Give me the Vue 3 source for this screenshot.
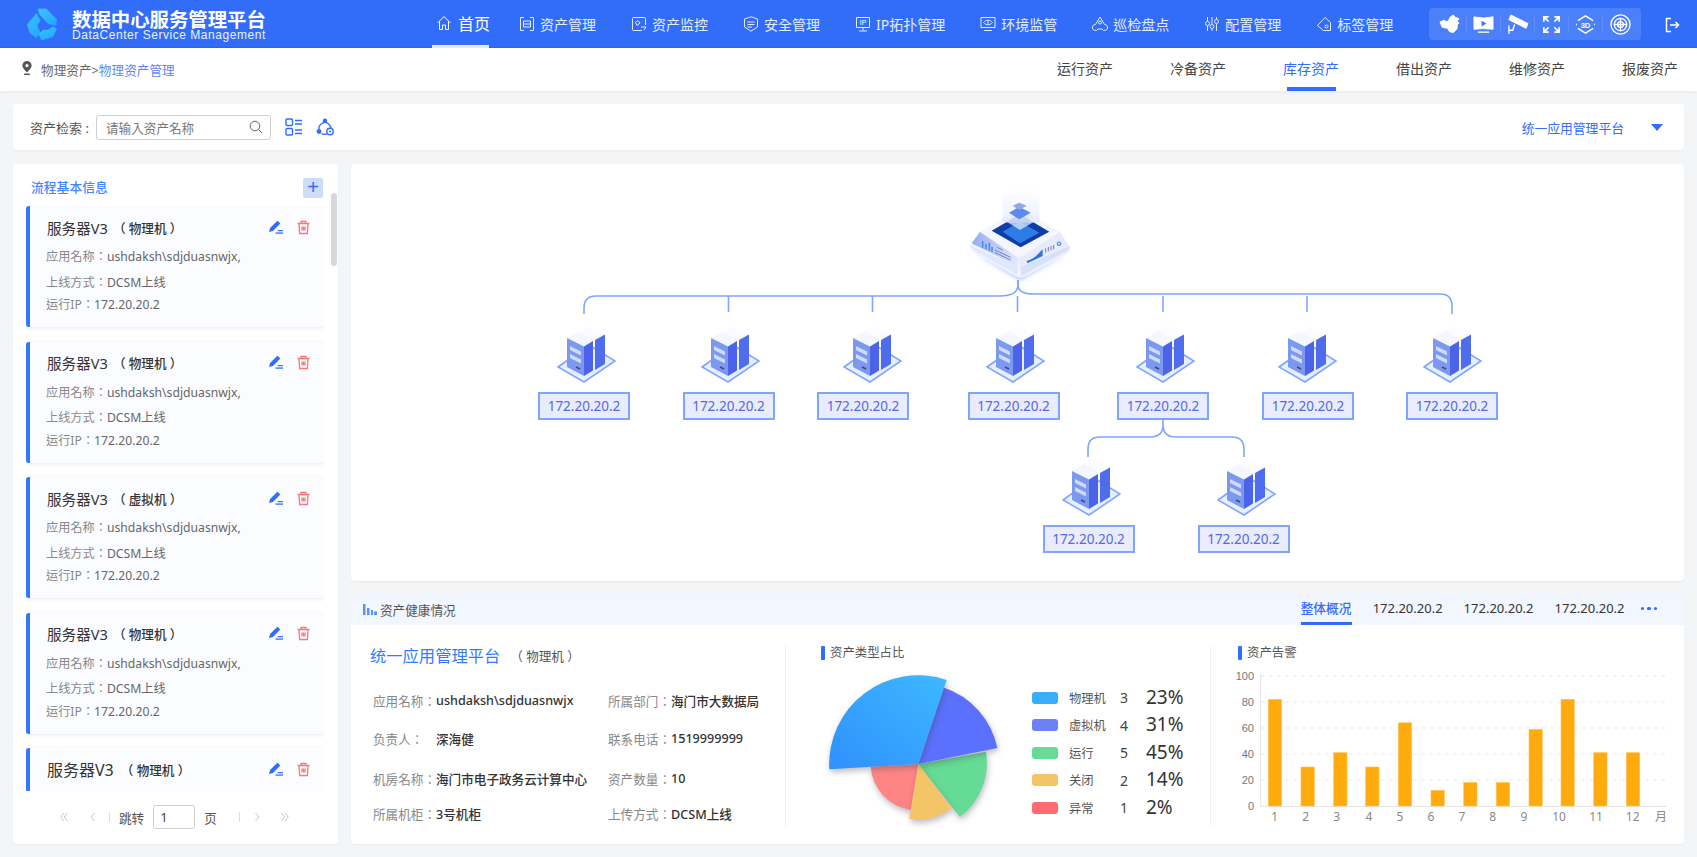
<script setup>
const navItems = [
  { t: '资产管理', i: 'asset' }, { t: '资产监控', i: 'monitor' }, { t: '安全管理', i: 'shield' },
  { t: 'IP拓扑管理', i: 'ip' }, { t: '环境监管', i: 'eye' }, { t: '巡检盘点', i: 'patrol' },
  { t: '配置管理', i: 'config' }, { t: '标签管理', i: 'tag' }
]
const subTabs = ['运行资产', '冷备资产', '库存资产', '借出资产', '维修资产', '报废资产']
const cards = [
  { kind: '物理机' }, { kind: '物理机' }, { kind: '虚拟机' }, { kind: '物理机' }
]
const rootLines = [728.5, 872.5, 1017.5, 1163, 1307]
const topNodes = [
  { x: 584, ix: 586 }, { x: 728.5, ix: 730 }, { x: 863, ix: 872.5 }, { x: 1013.5, ix: 1015 },
  { x: 1163, ix: 1165 }, { x: 1308, ix: 1307 }, { x: 1452, ix: 1452 }
]
const childNodes = [{ x: 1088.5, ix: 1091 }, { x: 1243.5, ix: 1246 }]
const nodePos = (n, top) => ({ left: `${n.x - 351 - 46}px`, top: `${top - 164}px` })
const iconPos = (n, top) => ({ left: `${n.ix - 351 - 29.5}px`, top: `${top - 164}px` })
const legend = [
  { n: '物理机', c: '#36adff', v: 3, p: '23%' }, { n: '虚拟机', c: '#6e80f6', v: 4, p: '31%' },
  { n: '运行', c: '#65db95', v: 5, p: '45%' }, { n: '关闭', c: '#f4c567', v: 2, p: '14%' },
  { n: '异常', c: '#ff6b72', v: 1, p: '2%' }
]
const slices = [
  { d: 'M918.3 764L910.7 810A47 47 0 0 1 870.7 766.7Z', f: '#ff8585' },
  { d: 'M918.3 764L986 751.7A68.8 68.8 0 0 1 960 817Z', f: '#65db95' },
  { d: 'M918.3 764L951.7 808A55.5 55.5 0 0 1 909.3 819Z', f: '#f4c567' },
  { d: 'M918.3 764L943.5 687.5A80.6 80.6 0 0 1 997.3 748Z', f: '#5b70fd' },
  { d: 'M918.3 764L829.3 769.3A89 89 0 0 1 946.7 680Z', f: 'url(#pieBlue)' }
]
const barX = [1268.3, 1301, 1333.7, 1365.7, 1398.3, 1431, 1463.7, 1496.3, 1529, 1561, 1593.7, 1626.3]
const barV = [82, 30, 41, 30, 64, 12, 18, 18, 59, 82, 41, 41]
const bars = barX.map((x, i) => ({ x, y: 806 - barV[i] * 1.3, h: barV[i] * 1.3 }))
const yTicks = [0, 20, 40, 60, 80, 100].map((v) => ({ v, y: 806 - v * 1.3 }))
const xLabels = [
  ['1', 1274.7], ['2', 1305.7], ['3', 1336.7], ['4', 1369], ['5', 1400], ['6', 1431], ['7', 1462],
  ['8', 1492.7], ['9', 1524], ['10', 1559], ['11', 1596], ['12', 1632.7], ['月', 1661]
]
</script>

<template>
  <div class="page">
    <header class="topbar">
      <div class="brand">
        <svg class="logo" viewBox="0 0 90 97">
          <defs>
            <linearGradient id="logoG" x1="0" y1="0" x2="1" y2="1">
              <stop offset="0" stop-color="#3fc4ff" />
              <stop offset="1" stop-color="#1fa3ff" />
            </linearGradient>
          </defs>
          <g fill="url(#logoG)" stroke="url(#logoG)" stroke-width="2" stroke-linejoin="round">
            <path d="M33 3L58 3L90 35L86 53L63 47L48 30L38 20Z" />
            <path d="M1 50L28 17L40 37L30 53L40 75L28 90L8 75Z" />
            <path d="M43 96L36 80L48 67L63 67L78 57L89 63L78 87L48 96Z" />
          </g>
        </svg>
        <div class="brand-text">
          <div class="brand-cn">数据中心服务管理平台</div>
          <div class="brand-en">DataCenter Service Management</div>
        </div>
      </div>
      <nav class="nav">
        <a class="nav-home">
          <svg class="nav-ic" viewBox="0 0 16 16"><path d="M1.5 8L8 1.5L14.5 8M3.5 6.5V14.5H6.5V10H9.5V14.5H12.5V6.5" /></svg>
          <span>首页</span>
        </a>
        <a v-for="n in navItems" :key="n.t" class="nav-item">
          <svg class="nav-ic" viewBox="0 0 16 16">
            <template v-if="n.i === 'asset'">
              <path d="M5 1.5H1.5V14.5H5M11 1.5H14.5V14.5H11M4.5 5H11.5V8H4.5ZM4.5 8V11H11.5V8" />
            </template>
            <template v-else-if="n.i === 'monitor'">
              <path d="M11 14.5H2.5A1 1 0 0 1 1.5 13.5V2.5A1 1 0 0 1 2.5 1.5H13.5A1 1 0 0 1 14.5 2.5V9M4.5 6.5L7 4.5L9 7L6 9.5ZM10 11H15L13 14" />
            </template>
            <template v-else-if="n.i === 'shield'">
              <path d="M8 .8L14.5 3V11L8 15.2L1.5 11V3ZM4.5 6H11.5M4.5 8.5H11.5M4.5 11H9" />
            </template>
            <template v-else-if="n.i === 'ip'">
              <path d="M1.5 1.5H14.5V11.5H1.5ZM8 11.5V14.5M4 15H12" />
              <text x="8" y="9" class="ic-text">IP</text>
            </template>
            <template v-else-if="n.i === 'eye'">
              <path d="M1 1.5H15V11.5H1ZM4 14.5H12" />
              <path d="M3.5 6.5C6 3.5 10 3.5 12.5 6.5C10 9.5 6 9.5 3.5 6.5ZM8 5.2V7.8" />
            </template>
            <template v-else-if="n.i === 'patrol'">
              <path d="M8 1L12.5 8.5A3 3 0 1 1 10 13H6A3 3 0 1 1 3.5 8.5Z" />
              <circle cx="8" cy="6.5" r="1.5" />
            </template>
            <template v-else-if="n.i === 'config'">
              <path d="M3.5 1V5M3.5 10V15M8 1V8M8 13V15M12.5 1V3M12.5 8V15" />
              <circle cx="3.5" cy="7.5" r="2" /><circle cx="8" cy="10.5" r="2" /><circle cx="12.5" cy="5.5" r="2" />
            </template>
            <template v-else>
              <path d="M9 1.5L14.5 6.5V14.5H7.5L1.5 9.5Z" />
              <circle cx="10.5" cy="10.5" r="1.5" />
            </template>
          </svg>
          <span>{{ n.t }}</span>
        </a>
      </nav>
      <div class="tools">
        <div class="tool">
          <svg viewBox="0 0 22 22"><path class="solid" d="M1 8.5L5 6.5L8 8L10 7L11.5 3.5L15 1L17 3.5L21 5L19 7.5L21 9.5L19 11.5L19 15.5L15 19.5L11 18.5L9 15L3.5 14Z" /></svg>
        </div>
        <div class="tool">
          <svg viewBox="0 0 22 22">
            <path class="solid" d="M1 3Q11 5.5 21 3V16Q11 14.5 1 16Z" />
            <path fill="#3e74f8" d="M9 7L14 10L9 13Z" />
            <path class="line" d="M5 19H17" />
          </svg>
        </div>
        <div class="tool">
          <svg viewBox="0 0 22 22">
            <path class="solid" d="M4 1L22 10L20 15L2 6Z" />
            <path class="line" d="M2 12V21M2 17H6L8 11" />
          </svg>
        </div>
        <div class="tool">
          <svg viewBox="0 0 22 22">
            <path class="line thick" d="M3 8V3H8M3 3L8 8M14 3H19V8M19 3L14 8M3 14V19H8M3 19L8 14M14 19H19V14M19 19L14 14" />
          </svg>
        </div>
        <div class="tool">
          <svg viewBox="0 0 22 22">
            <path class="line" d="M3 7L11 2L19 7M3 15L11 20L19 15M1 11H2M20 11H21" />
            <text x="11" y="14.5" class="ic-3d">3D</text>
          </svg>
        </div>
        <div class="tool last">
          <svg viewBox="0 0 22 22">
            <circle class="line" cx="11" cy="11" r="10" /><circle class="line" cx="11" cy="11" r="6.5" /><circle class="line" cx="11" cy="11" r="3" />
            <path class="line" d="M11 4V18M4 11H18" />
          </svg>
        </div>
      </div>
      <svg class="logout" viewBox="0 0 16 16"><path d="M7 1.5H2.5V14.5H7M6 8H14.5M11.5 5L14.5 8L11.5 11" /></svg>
    </header>

    <div class="subbar">
      <svg class="pin" viewBox="0 0 10 14"><path d="M5 0A4.6 4.6 0 0 0 .4 4.6C.4 7.5 5 11.5 5 11.5S9.6 7.5 9.6 4.6A4.6 4.6 0 0 0 5 0Z" /><circle cx="5" cy="4.6" r="1.6" fill="#fff" /><rect x="2" y="12.5" width="6" height="1.4" rx=".7" /></svg>
      <span class="crumb">物理资产&gt;</span><span class="crumb-active">物理资产管理</span>
      <div class="subtabs">
        <a v-for="s in subTabs" :key="s" class="subtab" :class="{ active: s === '库存资产' }">{{ s }}</a>
      </div>
    </div>

    <main class="content">
      <section class="search-panel">
        <span class="search-label">资产检索 :</span>
        <div class="search-box">
          <span>请输入资产名称</span>
          <svg viewBox="0 0 14 14"><circle cx="6" cy="6" r="4.8" /><path d="M9.5 9.5L13 13" /></svg>
        </div>
        <svg class="s-ic" viewBox="0 0 18 18"><rect x="1" y="1" width="6.5" height="6.5" rx="1" /><rect x="1" y="10.5" width="6.5" height="6.5" rx="1" /><path d="M10 2.5H17M10 6H17M10 12H17M10 15.5H17" /></svg>
        <svg class="s-ic" viewBox="0 0 18 18"><path d="M6 5.5Q9 3 12 5.5Q15 8 15 10M3 11Q2.5 7.5 6 5.5M5.5 15.5Q8 17 10.5 16" /><circle cx="9" cy="2.8" r="2.2" class="dot" /><circle cx="3" cy="13.5" r="2.4" class="dot" /><circle cx="14" cy="13.5" r="3.2" /><circle cx="14" cy="13.5" r="1.1" class="dot" /></svg>
        <span class="platform">统一应用管理平台</span>
        <span class="caret"></span>
      </section>

      <div class="columns">
        <aside class="left">
          <div class="left-head">
            <span class="left-title">流程基本信息</span>
            <span class="plus">+</span>
          </div>
          <div class="scroll-thumb"></div>
          <div class="card-list">
            <article v-for="(c, i) in cards" :key="i" class="card">
              <div class="card-title">
                <b>服务器V3</b><em>（ {{ c.kind }} ）</em>
                <svg class="ic-edit" viewBox="0 0 14 14"><path d="M8.8 .6L11.5 3.3L4.6 10.2L1 11.2L1.9 7.5Z" /><rect x="7" y="11.6" width="7" height="1.2" /><rect x="9" y="9.4" width="5" height="1.1" /></svg>
                <svg class="ic-del" viewBox="0 0 13 14"><path d="M.5 3H12.5M4 3V1H9V3M2 3L2.6 13H10.4L11 3M5 6V10M6.5 6V10M8 6V10" /></svg>
              </div>
              <p class="l1"><i>应用名称：</i>ushdaksh\sdjduasnwjx,</p>
              <p class="l2"><i>上线方式：</i>DCSM上线</p>
              <p class="l3"><i>运行IP：</i>172.20.20.2</p>
            </article>
            <article class="card card-cut">
              <div class="card-title big">
                <b>服务器V3</b><em>（ 物理机 ）</em>
                <svg class="ic-edit" viewBox="0 0 14 14"><path d="M8.8 .6L11.5 3.3L4.6 10.2L1 11.2L1.9 7.5Z" /><rect x="7" y="11.6" width="7" height="1.2" /><rect x="9" y="9.4" width="5" height="1.1" /></svg>
                <svg class="ic-del" viewBox="0 0 13 14"><path d="M.5 3H12.5M4 3V1H9V3M2 3L2.6 13H10.4L11 3M5 6V10M6.5 6V10M8 6V10" /></svg>
              </div>
            </article>
          </div>
          <div class="pager">
            <svg class="pg dbl" viewBox="0 0 8 10"><path d="M4 1L.8 5L4 9M7.5 1L4.3 5L7.5 9" /></svg>
            <svg class="pg sgl m22" viewBox="0 0 5 10"><path d="M4.5 1L1 5L4.5 9" /></svg>
            <span class="pg-sep m14"></span>
            <span class="pg-text m9">跳转</span>
            <input class="pg-input" value="1" readonly />
            <span class="pg-text m9">页</span>
            <span class="pg-sep m22"></span>
            <svg class="pg sgl m15" viewBox="0 0 5 10"><path d="M.5 1L4 5L.5 9" /></svg>
            <svg class="pg dbl m21" viewBox="0 0 8 10"><path d="M4 1L7.2 5L4 9M.5 1L3.7 5L.5 9" /></svg>
          </div>
        </aside>

        <div class="right">
          <section class="topo">
            <svg class="topo-lines" viewBox="351 164 1333 417">
              <g fill="none" stroke="#7ea6ff" stroke-width="1.6">
                <path d="M1018 280V285Q1018 296 1000 296H596Q584 296 584 308V314" />
                <path d="M1018 280V285Q1018 294 1034 294H1440Q1452 294 1452 306V314" />
                <path v-for="x in rootLines" :key="x" :d="`M${x} 296V312`" />
                <path d="M1163 419V425Q1163 437 1150 437H1100Q1088 437 1088 449V457M1163 425Q1163 437 1176 437H1232Q1244 437 1244 449V457" />
              </g>
            </svg>
            <svg class="root-ic" viewBox="0 0 360 330">
              <defs>
                <linearGradient id="glow" x1="0" y1="0" x2="0" y2="1"><stop offset="0" stop-color="#fff" /><stop offset="1" stop-color="#d5e2ff" /></linearGradient>
                <linearGradient id="panelL" x1="0" y1="0" x2="1" y2="0"><stop offset="0" stop-color="#94aaf3" /><stop offset="1" stop-color="#e6eafb" /></linearGradient>
                <filter id="rootGlow" x="-20%" y="-30%" width="140%" height="160%"><feGaussianBlur stdDeviation="7" /></filter>
              </defs>
              <path d="M35 215L180 300L325 220L180 285Z" fill="#9fc0ff" filter="url(#rootGlow)" />
              <path d="M30 195Q28 208 45 218L165 288Q180 298 198 288L318 222Q335 212 328 195L180 110Z" fill="#eef2fe" />
              <path d="M32 198L172 258V285L45 212Q30 204 32 198Z" fill="#e2e8fb" />
              <path d="M182 262L326 198Q332 208 316 216L184 288Z" fill="#d9e0fa" />
              <path d="M35 190L60 155L178 235L172 258Z" fill="url(#panelL)" />
              <path d="M178 235L300 155L325 195L180 262Z" fill="#e7eafb" />
              <path d="M60 155L180 85L300 155L178 235Z" fill="#f4f6fe" />
              <path d="M95 152L180 103L268 155L182 202Z" fill="#103ca8" />
              <path d="M128 155L180 125L238 158L180 190Z" fill="#2f7ce6" />
              <rect x="128" y="28" width="110" height="100" fill="url(#glow)" opacity=".55" />
              <path d="M140 125L180 104L222 125L180 150Z" fill="#dfe8fb" opacity=".75" />
              <path d="M147 98L178 80L212 98L178 118Z" fill="#5e8af0" />
              <path d="M158 77L178 68L200 77L178 90Z" fill="#8ea8e8" />
              <g stroke="#3f8cf0" stroke-width="4.5"><path d="M68 183V203M78 192V208M88 188V212M96 200V215" /></g>
              <g stroke="#7686c2" stroke-width="3"><path d="M105 210L152 232M105 218L152 240M112 202L128 210" /></g>
              <path d="M200 243Q222 235 232 224L248 208V228L202 250Z" fill="#2d76e0" />
              <g stroke="#6d7db8" stroke-width="3"><path d="M257 205V218M265 201V214M273 198V211M281 195V208" /></g>
              <circle cx="297" cy="191" r="5" fill="none" stroke="#3f8cf0" stroke-width="3.5" />
            </svg>
            <template v-for="n in topNodes" :key="n.x">
              <svg class="server" :style="iconPos(n, 325)" viewBox="0 0 59 58"><use href="#srv" /></svg>
              <div class="ip-node" :style="nodePos(n, 392)">172.20.20.2</div>
            </template>
            <template v-for="n in childNodes" :key="n.x">
              <svg class="server" :style="iconPos(n, 458)" viewBox="0 0 59 58"><use href="#srv" /></svg>
              <div class="ip-node" :style="nodePos(n, 525)">172.20.20.2</div>
            </template>
            <svg width="0" height="0" class="defs-only">
              <defs>
                <g id="srv">
                  <path d="M1 42L32 20L58 36L27 57Z" fill="#e6effe" stroke="#7ea6ff" stroke-width="1.6" />
                  <path d="M22 6L32 1L48 9.5L38 15Z" fill="#fbfcff" />
                  <path d="M38 15L48 9.5V39L38 45Z" fill="#4f6cec" />
                  <path d="M10 13L22 6L38 15L27 21Z" fill="#f4f7ff" />
                  <path d="M10 13L27 21.5V51L10 42Z" fill="#7c99f0" />
                  <path d="M27 21.5L36 16V45.5L27 51Z" fill="#4a63e8" />
                  <path d="M13 21L24 26.5V30.5L13 25ZM13 29L24 34.5V38.5L13 33Z" fill="#cfdafc" />
                  <path d="M19 42L23 44" stroke="#33479e" stroke-width="1.4" />
                </g>
              </defs>
            </svg>
          </section>

          <section class="health">
            <div class="health-head">
              <svg class="h-ic" viewBox="0 0 14 11"><path d="M0 0H2.5V11H0ZM4 4H6.5V11H4ZM8 6H10V11H8ZM11 7.5H14V11H11Z" /></svg>
              <span class="h-title">资产健康情况</span>
              <div class="h-tabs">
                <a class="h-tab active">整体概况</a>
                <a class="h-tab">172.20.20.2</a>
                <a class="h-tab">172.20.20.2</a>
                <a class="h-tab">172.20.20.2</a>
                <span class="dots"><i></i><i></i><i></i></span>
              </div>
            </div>
            <div class="health-body">
              <div class="col-info">
                <div class="info-title"><strong>统一应用管理平台</strong><span>（ 物理机 ）</span></div>
                <div class="info-grid">
                  <div><label>应用名称：</label><b>ushdaksh\sdjduasnwjx</b></div>
                  <div><label>所属部门：</label><b>海门市大数据局</b></div>
                  <div><label>负责人：</label><b>深海健</b></div>
                  <div><label>联系电话：</label><b>1519999999</b></div>
                  <div><label>机房名称：</label><b>海门市电子政务云计算中心</b></div>
                  <div><label>资产数量：</label><b>10</b></div>
                  <div><label>所属机柜：</label><b>3号机柜</b></div>
                  <div><label>上传方式：</label><b>DCSM上线</b></div>
                </div>
              </div>
              <div class="col-pie">
                <div class="sec-title">资产类型占比</div>
                <div class="pie-row">
                  <svg class="pie" viewBox="820 665 190 165">
                    <defs>
                      <linearGradient id="pieBlue" x1="0" y1="1" x2="1" y2="0"><stop offset="0" stop-color="#2f90fd" /><stop offset="1" stop-color="#3eb8ff" /></linearGradient>
                    </defs>
                    <path v-for="s in slices" :key="s.d" :d="s.d" :fill="s.f" class="slice" />
                  </svg>
                  <ul class="legend">
                    <li v-for="l in legend" :key="l.n">
                      <span class="swatch" :style="{ background: l.c }"></span>
                      <span class="lg-name">{{ l.n }}</span>
                      <span class="lg-val">{{ l.v }}</span>
                      <span class="lg-pct">{{ l.p }}</span>
                    </li>
                  </ul>
                </div>
              </div>
              <div class="col-bar">
                <div class="sec-title">资产告警</div>
                <svg class="bars" viewBox="1235 665 440 165">
                  <g v-for="t in yTicks" :key="t.v">
                    <line v-if="t.v" x1="1261" :y1="t.y" x2="1668" :y2="t.y" stroke="#e9e9e9" stroke-dasharray="4 4" />
                    <text x="1254" :y="t.y + 4" text-anchor="end" class="axis">{{ t.v }}</text>
                  </g>
                  <path d="M1260.7 674V806.5H1667" fill="none" stroke="#e4e4e8" />
                  <rect v-for="b in bars" :key="b.x" :x="b.x" :y="b.y" width="13.3" :height="b.h" fill="#ffaa0d" stroke="#ffc252" stroke-width=".6" />
                  <text v-for="l in xLabels" :key="l[0]" :x="l[1]" y="821" text-anchor="middle" class="axis x">{{ l[0] }}</text>
                </svg>
              </div>
            </div>
          </section>
        </div>
      </div>
    </main>
  </div>
</template>

<style>
html, body { margin: 0; background: #f4f5f7; }
</style>

<style scoped>
.page {
  width: 1697px; height: 857px; overflow: hidden; background: #f4f5f7;
  font-family: "Noto Sans", "Noto Sans CJK TC", sans-serif; color: #555; font-size: 12.6px;
}
p, ul { margin: 0; padding: 0; }
i, em { font-style: normal; }

/* top bar */
.topbar { height: 48px; background: #326dfa; display: flex; align-items: center; color: #fff; box-sizing: border-box; border-bottom: 1px solid #2f66ee; }
.brand { display: flex; align-items: center; margin-left: 27px; width: 405px; flex: none; }
.logo { width: 30px; height: 32px; flex: none; }
.brand-text { margin: 4px 0 0 15px; }
.brand-cn { font-size: 19.4px; font-weight: 700; line-height: 20px; height: 20px; white-space: nowrap; font-family: "Noto Sans CJK SC", sans-serif; }
.brand-en { font-family: "Liberation Sans", sans-serif; font-size: 12px; letter-spacing: .54px; line-height: 13px; white-space: nowrap; color: #eaf1ff; }
.nav { display: flex; align-items: stretch; height: 48px; }
.nav-home { width: 57px; box-sizing: border-box; padding-left: 4px; display: flex; align-items: center; gap: 6px; font-size: 16px; border-bottom: 3px solid #e4ebfb; margin-right: 30px; height: 48px; padding-top: 2px; white-space: nowrap; }
.nav-item { display: flex; align-items: center; gap: 5px; font-size: 14px; margin-right: 35px; color: #e3ecff; white-space: nowrap; }
.nav-ic { width: 16px; height: 16px; fill: none; stroke: currentColor; stroke-width: 1; flex: none; }
.ic-text { font: 7px "Liberation Sans", sans-serif; fill: #fff; stroke: none; text-anchor: middle; }
.tools { position: absolute; left: 1429px; top: 8px; width: 212px; height: 32px; box-sizing: border-box; padding-left: 4px; background: rgba(255,255,255,.13); border-radius: 4px; display: flex; align-items: center; }
.tool { width: 34px; height: 16px; display: flex; align-items: center; justify-content: center; border-right: 1px solid #5d8df8; box-sizing: border-box; }
.tool.last { border-right: 0; }
.tool svg { width: 21px; height: 21px; flex: none; overflow: visible; }
.solid { fill: #fff; stroke: #fff; stroke-linejoin: round; }
.line { fill: none; stroke: #fff; stroke-width: 1.4; }
.line.thick { stroke-width: 1.8; }
.ic-3d { font: 700 8px "Liberation Sans", sans-serif; fill: #fff; text-anchor: middle; }
.logout { position: absolute; left: 1664px; top: 17px; width: 16px; height: 16px; fill: none; stroke: #fff; stroke-width: 1.5; }

/* sub bar */
.subbar { height: 43px; background: #fff; display: flex; align-items: center; padding-left: 22px; box-shadow: 0 1px 3px rgba(60,80,120,.08); position: relative; }
.pin { width: 10px; height: 14px; fill: #555; margin-right: 9px; margin-top: -3px; }
.crumb { color: #666; letter-spacing: .05px; }
.crumb-active { color: #5f86f5; letter-spacing: .05px; }
.subtabs { margin-left: auto; margin-right: 19px; display: flex; align-items: stretch; height: 43px; gap: 57px; }
.subtab { font-size: 14px; line-height: 41px; width: 56px; text-align: center; color: #444; position: relative; white-space: nowrap; }
.subtab.active { color: #2f6dfa; }
.subtab.active::after { content: ""; position: absolute; left: 4px; right: 3px; bottom: 0; height: 4px; background: #2f6dfa; }

/* content */
.content { padding: 13px 13px 0; }
.search-panel { height: 46px; background: #fff; border-radius: 4px; display: flex; align-items: center; padding: 0 21px 0 17px; box-shadow: 0 1px 2px rgba(60,80,120,.06); }
.search-label { width: 66px; font-size: 13px; color: #555; white-space: nowrap; }
.search-box { width: 175px; height: 25px; box-sizing: border-box; border: 1px solid #cfcfcf; border-radius: 3px; display: flex; align-items: center; padding: 0 7px 0 9px; color: #777; font-size: 12.6px; }
.search-box svg { width: 14px; height: 14px; margin-left: auto; fill: none; stroke: #666; stroke-width: 1; }
.s-ic { width: 18px; height: 18px; fill: none; stroke: #2f6dfa; stroke-width: 1.4; margin-left: 14px; }
.s-ic + .s-ic { margin-left: 13px; }
.dot { fill: #2f6dfa; stroke: none; }
.platform { margin-left: auto; color: #2f6dfa; font-size: 12.8px; }
.caret { margin-left: 27px; width: 0; height: 0; border-left: 6.5px solid transparent; border-right: 6.5px solid transparent; border-top: 7px solid #2f6dfa; }

.columns { display: flex; gap: 13px; margin-top: 14px; height: 680px; }

/* left */
.left { width: 325px; flex: none; background: #fff; border-radius: 4px; box-sizing: border-box; padding: 10px 0 0 13px; position: relative; box-shadow: 0 1px 2px rgba(60,80,120,.06); }
.left-head { height: 28px; width: 297px; display: flex; align-items: center; justify-content: space-between; padding-left: 5px; box-sizing: border-box; }
.left-title { color: #3f87ff; font-size: 12.8px; font-weight: 500; margin-top: -3px; }
.plus { width: 20px; height: 20px; background: #ccdcfa; color: #2f6dfa; border-radius: 2px; text-align: center; font: 20px/19px "Liberation Sans", sans-serif; }
.scroll-thumb { position: absolute; left: 318px; top: 29px; width: 6px; height: 73px; background: #d8d8d8; border-radius: 3px; }
.card-list { margin-top: 4px; width: 298px; height: 585px; overflow: hidden; display: flex; flex-direction: column; gap: 14.5px; padding-bottom: 2px; box-sizing: border-box; }
.card { height: 121px; flex: none; box-sizing: border-box; background: #fbfcff; border-left: 4px solid #3377ff; border-radius: 3px; padding: 6px 14px 0 17px; box-shadow: 0 1px 4px rgba(70,90,140,.14); }
.card-cut { height: 44px; }
.card-title { height: 30px; margin-bottom: 2px; display: flex; align-items: center; }
.card-title b { font-size: 14.6px; font-weight: 400; color: #333; }
.card-title em { font-size: 12.6px; font-weight: 500; margin-left: 5px; color: #333; }
.card-title.big b { font-size: 16px; }
.card-title.big em { margin-left: 7px; }
.ic-edit { width: 15px; height: 15px; margin-left: auto; fill: #2f6dfa; }
.ic-del { width: 13px; height: 15px; margin-left: 14px; fill: none; stroke: #f87a7a; stroke-width: 1.3; }
.card p { color: #666; margin-left: -1px; white-space: nowrap; font-size: 12.2px; }
.card p i { color: #888; }
.l1, .l2 { height: 25.5px; line-height: 25.5px; }
.l3 { height: 20px; line-height: 20px; }

.pager { display: flex; align-items: center; margin: 14px 0 0 34px; height: 24px; }
.pg { fill: none; stroke: #c4c4c4; stroke-width: 1; height: 10px; }
.dbl { width: 8px; }
.sgl { width: 5px; }
.pg-sep { width: 1px; height: 10px; background: #ddd; }
.pg-text { color: #555; font-size: 12.6px; }
.pg-input { width: 42px; height: 24px; box-sizing: border-box; border: 1px solid #cfcfcf; border-radius: 3px; margin-left: 9px; padding: 0 0 0 6px; font: 13px "Noto Sans", sans-serif; color: #444; outline: none; }
.m9 { margin-left: 9px; }
.m14 { margin-left: 14px; }
.m15 { margin-left: 15px; }
.m21 { margin-left: 21px; }
.m22 { margin-left: 22px; }

/* right */
.right { flex: 1; min-width: 0; display: flex; flex-direction: column; gap: 13px; }
.topo { height: 417px; background: #fff; border-radius: 4px; position: relative; box-shadow: 0 1px 2px rgba(60,80,120,.06); flex: none; }
.topo-lines { position: absolute; left: 0; top: 0; width: 1333px; height: 417px; }
.root-ic { position: absolute; left: 609px; top: 16px; width: 120px; height: 110px; }
.server { position: absolute; width: 59px; height: 58px; }
.ip-node { position: absolute; width: 92px; height: 28px; box-sizing: border-box; border: 2px solid #7ea6ff; background: #e9ecfd; color: #5469e6; font-size: 13.5px; line-height: 24px; text-align: center; white-space: nowrap; }
.defs-only { position: absolute; }

.health { height: 250px; background: #fff; border-radius: 4px; overflow: hidden; box-shadow: 0 1px 2px rgba(60,80,120,.06); flex: none; }
.health-head { height: 31px; background: #f2f6fe; display: flex; align-items: center; padding: 0 27px 0 12px; }
.h-ic { width: 14px; height: 11px; fill: #5b93f5; }
.h-title { margin-left: 3px; color: #555; }
.h-tabs { margin-left: auto; display: flex; align-items: center; gap: 21px; height: 31px; }
.h-tab { font-size: 13px; color: #333; white-space: nowrap; line-height: 31px; height: 31px; box-sizing: border-box; padding-bottom: 0; position: relative; margin-top: -2px; }
.h-tab.active { color: #2f6dfa; font-weight: 500; width: 51px; font-size: 12.7px; }
.h-tab.active::after { content: ""; position: absolute; left: 0; right: 0; bottom: -1px; height: 3px; background: #2f6dfa; }
.dots { display: flex; gap: 3px; margin-left: -5px; margin-top: -2px; }
.dots i { width: 3.5px; height: 3.5px; border-radius: 50%; background: #2f6dfa; }

.health-body { display: flex; height: 219px; padding-top: 21px; box-sizing: border-box; }
.col-info { width: 435px; height: 180px; flex: none; box-sizing: border-box; border-right: 1px solid #eef0f4; padding-left: 19px; }
.info-title { display: flex; align-items: center; height: 18px; }
.info-title strong { font-size: 16.3px; font-weight: 400; color: #2f7dff; }
.info-title span { margin-left: 10px; color: #555; }
.info-grid { display: grid; grid-template-columns: 235px 1fr; grid-template-rows: 38px 38px 42px 28px; margin-top: 17px; margin-left: 3px; }
.info-grid div { display: flex; align-items: center; white-space: nowrap; }
.info-grid label { width: 63px; color: #888; flex: none; }
.info-grid b { font-weight: 500; color: #333; }
.col-pie { width: 425px; height: 180px; flex: none; box-sizing: border-box; border-right: 1px solid #eef0f4; padding-left: 35px; }
.sec-title { position: relative; padding-left: 9px; line-height: 14px; height: 14px; font-size: 12.4px; color: #555; white-space: nowrap; }
.sec-title::before { content: ""; position: absolute; left: 0; top: 0; width: 3.5px; height: 14px; background: #2f6dfa; border-radius: 1px; }
.pie-row { display: flex; margin-top: 5px; }
.pie { width: 190px; height: 165px; flex: none; margin-left: -1px; overflow: visible; }
.slice { filter: drop-shadow(1px 3px 3px rgba(60,60,80,.35)); }
.legend { list-style: none; margin: 19px 0 0 22px; }
.legend li { display: flex; align-items: center; height: 27.5px; }
.swatch { width: 26px; height: 12px; border-radius: 3px; flex: none; }
.lg-name { width: 51px; margin-left: 11px; font-size: 12.3px; color: #555; }
.lg-val { width: 26px; font-size: 14px; color: #444; }
.lg-pct { font-size: 19px; color: #333; margin-top: -2px; }
.col-bar { flex: 1; padding-left: 27px; box-sizing: border-box; }
.bars { width: 440px; height: 165px; display: block; margin: 5px 0 0 -3px; }
.axis { font: 11px "Liberation Sans", sans-serif; fill: #777; }
.axis.x { font-size: 12px; fill: #888; font-family: "Noto Sans", "Noto Sans CJK SC", sans-serif; }
</style>
